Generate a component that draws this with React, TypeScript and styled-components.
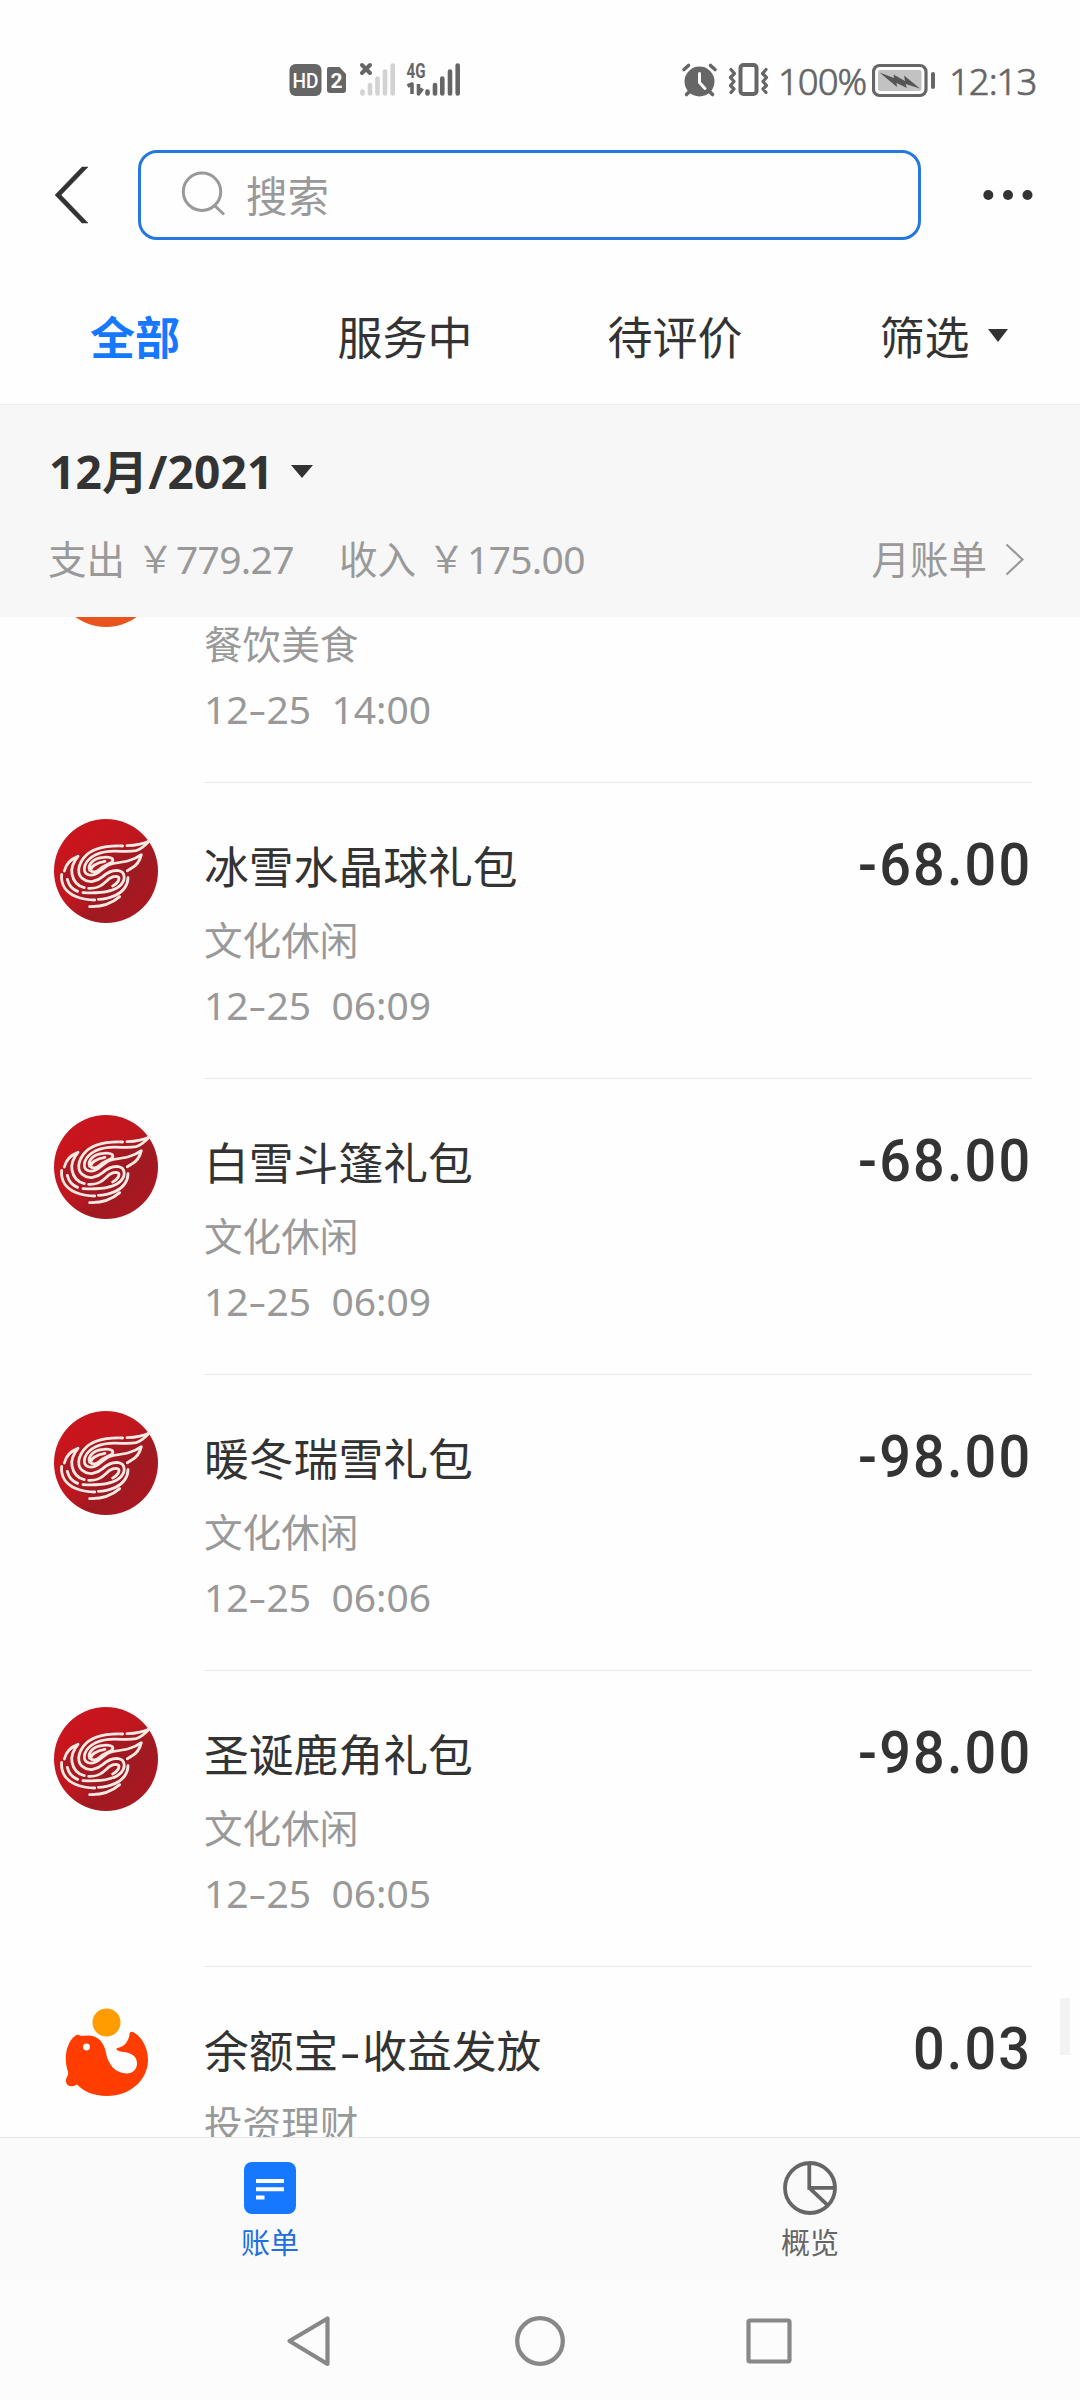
import React from "react";
import styled, { createGlobalStyle } from "styled-components";

const Global = createGlobalStyle`
  * { box-sizing: border-box; }
  html, body { margin: 0; padding: 0; background: #fff; }
  body { font-family: "Noto Sans", "Noto Sans CJK SC", sans-serif; color: #333; }
  svg { display: block; flex: none; }
`;

const Screen = styled.div`
  width: 1080px;
  height: 2400px;
  display: flex;
  flex-direction: column;
  background: #fefefe;
  overflow: hidden;
`;

const StatusBar = styled.div`
  height: 130px;
  flex: none;
  display: flex;
  align-items: center;
  justify-content: space-between;
  padding: 30px 42px 0 289px;
  color: #666;
`;

const StatusGroup = styled.div`
  display: flex;
  align-items: center;
`;

const StatusText = styled.span<{ $left: number; $width: number }>`
  margin-left: ${(p) => p.$left}px;
  width: ${(p) => p.$width}px;
  padding-top: 2px;
  font-size: 36.5px;
  font-weight: 300;
  line-height: 40px;
  letter-spacing: -1px;
  white-space: nowrap;
  -webkit-text-stroke: 0.7px #666;
`;

const SearchRow = styled.div`
  height: 130px;
  flex: none;
  display: flex;
  align-items: center;
  padding: 0 46px 0 54px;
`;

const SearchBox = styled.div`
  width: 783px;
  height: 90px;
  margin: 0 61px 0 48px;
  display: flex;
  align-items: center;
  gap: 20px;
  padding: 0 0 2px 40px;
  border: 3px solid #2478e0;
  border-radius: 19px;
  color: #999;
  font-size: 41.5px;
`;

const Tabs = styled.div`
  height: 144px;
  flex: none;
  display: flex;
  padding-top: 6px;
`;

const Tab = styled.div<{ $active?: boolean }>`
  flex: 0 0 270px;
  display: flex;
  align-items: center;
  justify-content: center;
  gap: 18px;
  font-size: 45px;
  color: ${(p) => (p.$active ? "#1677ff" : "#333")};
  font-weight: ${(p) => (p.$active ? 700 : 400)};
`;

const FilterTab = styled(Tab)`
  padding-right: 3px;
`;

const Triangle = styled.i<{ $size: number }>`
  width: 0;
  height: 0;
  border-left: ${(p) => p.$size}px solid transparent;
  border-right: ${(p) => p.$size}px solid transparent;
  border-top: 13px solid #333;
`;

const Summary = styled.div`
  height: 213px;
  flex: none;
  display: flex;
  flex-direction: column;
  padding: 36px 55px 0 48px;
  background: #f7f7f7;
  border-top: 1px solid #ededed;
`;

const Month = styled.div`
  display: flex;
  align-items: center;
  gap: 17px;
  height: 60px;
  padding-left: 1px;
  font-size: 46px;
  line-height: 60px;
  font-weight: 700;
`;

const MonthLabel = styled.span`
  letter-spacing: 0.2px;
`;

const Totals = styled.div`
  display: flex;
  align-items: center;
  height: 50px;
  margin-top: 33px;
  font-size: 39px;
  line-height: 50px;
  color: #999;
`;

const TotalLabel = styled.span<{ $left?: number }>`
  margin-left: ${(p) => p.$left ?? 0}px;
  font-size: 38.5px;
`;

const Yen = styled.span`
  margin-left: 12px;
  width: 39px;
  font-size: 37px;
`;

const TotalValue = styled.span`
  width: 119px;
  letter-spacing: -0.7px;
`;

const MonthlyBill = styled.div`
  margin-left: auto;
  display: flex;
  align-items: center;
  gap: 18px;
  font-size: 38.5px;
`;

const Body = styled.div`
  position: relative;
  flex: 1;
  min-height: 0;
  overflow: hidden;
`;

const List = styled.div`
  margin-top: -130px;
`;

const Row = styled.div`
  height: 296px;
  display: flex;
  padding: 0 48px 0 54px;
`;

const Avatar = styled.div`
  width: 104px;
  height: 104px;
  margin: 36px 46px 0 0;
  flex: none;
`;

const PlainAvatar = styled(Avatar)`
  border-radius: 50%;
  background: #e8541e;
`;

const RowContent = styled.div`
  flex: 1;
  display: flex;
  justify-content: space-between;
  padding-top: 52px;
  border-bottom: 1px solid #e9e9e9;
`;

const Info = styled.div`
  display: flex;
  flex-direction: column;
`;

const Title = styled.div`
  height: 64px;
  font-size: 44.8px;
  line-height: 64px;
  white-space: nowrap;
`;

const Category = styled.div`
  height: 56px;
  margin-top: 13px;
  font-size: 38.6px;
  line-height: 56px;
  color: #999;
`;

const Time = styled.div`
  height: 56px;
  margin-top: 9px;
  font-size: 39px;
  line-height: 56px;
  color: #999;
  white-space: pre;
`;

const Dash = styled.span<{ $gap: number }>`
  display: inline-block;
  margin: 0 ${(p) => p.$gap}px;
  transform: scaleX(1.45);
`;

const Amount = styled.div`
  height: 64px;
  margin: -2px 0 0;
  font-family: Roboto, sans-serif;
  font-weight: 500;
  font-size: 60px;
  line-height: 64px;
  letter-spacing: 2.3px;
  transform: scaleX(0.93);
  transform-origin: right center;
`;

const ScrollThumb = styled.div`
  position: absolute;
  right: 10px;
  top: 1381px;
  width: 10px;
  height: 57px;
  background: #f3f3f3;
`;

const BottomTabs = styled.div`
  height: 144px;
  flex: none;
  display: flex;
  background: #fafafa;
  border-top: 1px solid #e6e6e6;
`;

const BottomTab = styled.div<{ $active?: boolean }>`
  flex: 1;
  display: flex;
  flex-direction: column;
  align-items: center;
  padding-top: 23px;
  font-size: 29px;
  line-height: 42px;
  color: ${(p) => (p.$active ? "#1f6fe0" : "#666")};
`;

const BottomLabel = styled.span`
  margin-top: 7px;
`;

const SystemNav = styled.div`
  height: 119px;
  flex: none;
  display: flex;
  justify-content: space-between;
  align-items: center;
  padding: 0 286px 0 285px;
  background: #fcfcfc;
`;

const HomeSlot = styled.div`
  margin-left: 4px;
`;

const StatusSignals = () => (
  <svg width="174" height="36" viewBox="289 62 174 36">
    <rect x="289.5" y="64" width="32" height="32" rx="6" fill="#666" />
    <text x="305.5" y="88" fontFamily="Roboto" fontWeight="500" fontSize="21" fill="#fff" textAnchor="middle" textLength="26" lengthAdjust="spacingAndGlyphs">HD</text>
    <path d="M329 67h10.500l6.500 7v16q0 3-3 3h-13q-3 0-3-3v-21q0-2 2-2z" fill="#666" />
    <text x="336.500" y="88" fontFamily="Roboto" fontWeight="700" fontSize="21" fill="#fff" textAnchor="middle">2</text>
    <g strokeWidth="4.600" strokeLinecap="round" stroke="#d2d2d2">
      <path d="M362.500 91.500v2M370 85v8.500M377.500 78.500v15M385 71.500v22M392.700 65.500v28" />
    </g>
    <path d="M362 65l8 8M370 65l-8 8" stroke="#666" strokeWidth="4" strokeLinecap="round" />
    <text x="406.500" y="77.500" fontFamily="Roboto" fontWeight="700" fontSize="20" fill="#666" textLength="19" lengthAdjust="spacingAndGlyphs">4G</text>
    <path d="M407.500 86l4.500-2v10M418.500 84v10l4-5.500" fill="none" stroke="#666" strokeWidth="3.600" strokeLinejoin="round" />
    <path d="M427.500 91.500v2M435 85v8.500M442.300 78.500v15M450 71.500v22M457.700 65.500v28" stroke="#666" strokeWidth="4.600" strokeLinecap="round" />
  </svg>
);

const AlarmIcon = () => (
  <svg width="88" height="36" viewBox="681 62 88 36">
    <circle cx="699.500" cy="81.500" r="15" fill="#666" />
    <path d="M699.500 73.500v9l5.500 6" fill="none" stroke="#fff" strokeWidth="3" strokeLinecap="round" />
    <path d="M684 69.500l4.500-4M715 69.500l-4.500-4M690 91l-3.500 3.500M709 91l3.500 3.500" stroke="#666" strokeWidth="3.600" strokeLinecap="round" />
    <rect x="740.500" y="65" width="16" height="29" rx="3" fill="none" stroke="#666" strokeWidth="4" />
    <path d="M731 69.500l3.500 4-4 4 3.500 4-3.500 4 3.500 3.500-3 3.500M766 69.500l-3.500 4 4 4-3.500 4 3.500 4-3.500 3.500 3 3.500" fill="none" stroke="#666" strokeWidth="3.200" strokeLinecap="round" strokeLinejoin="round" />
  </svg>
);

const BatteryIcon = () => (
  <svg width="64" height="36" viewBox="872 62 64 36">
    <rect x="873.500" y="65.500" width="52.500" height="30" rx="6" fill="none" stroke="#666" strokeWidth="3.200" />
    <rect x="878" y="70" width="43.500" height="21" rx="2" fill="#c2c2c2" />
    <path d="M879.500 72.500l14.500 5.500-.5-3.500 11.500 6.500-1-5.500 16 13-14.500-4.500 1.500 4-10.500-5 .5 4z" fill="#555" />
    <rect x="931" y="72" width="4" height="17" rx="2" fill="#666" />
  </svg>
);

const BackIcon = () => (
  <svg width="36" height="60" viewBox="54 165 36 60">
    <path d="M82 167h6L61 195l27 28h-6L55 195z" fill="#333" stroke="#333" strokeWidth="0.500" />
  </svg>
);

const SearchIcon = () => (
  <svg width="45" height="46" viewBox="181 172 45 46">
    <circle cx="202" cy="192.700" r="18.700" fill="none" stroke="#999" strokeWidth="3" />
    <path d="M214.500 206.500l9.500 9" stroke="#999" strokeWidth="3" />
  </svg>
);

const MoreIcon = () => (
  <svg width="52" height="12" viewBox="982 189 52 12">
    <circle cx="988.300" cy="195" r="5" fill="#333" />
    <circle cx="1008" cy="195" r="5" fill="#333" />
    <circle cx="1027.500" cy="195" r="5" fill="#333" />
  </svg>
);

const ChevronRight = () => (
  <svg width="20" height="34" viewBox="1005 540 20 34">
    <path d="M1006.500 542.500l16 15-16 15" fill="none" stroke="#999" strokeWidth="2.200" />
  </svg>
);

const FlameLogo = () => (
  <svg width="104" height="104" viewBox="-6 -51 312 312">
    <defs>
      <linearGradient id="flameBg" x1="0.250" y1="0.150" x2="0.850" y2="0.750">
        <stop offset="0" stopColor="#c9151d" />
        <stop offset="0.450" stopColor="#c0171f" />
        <stop offset="0.750" stopColor="#9f1a22" />
        <stop offset="1" stopColor="#a81820" />
      </linearGradient>
    </defs>
    <circle cx="150" cy="105" r="156" fill="url(#flameBg)" />
    <path d="M66 62Q22 80 18 120Q30 190 124 208Q204 190 215 112Q244 96 258 56L282 14L200 30Q100 30 66 62Z" fill="#8c1a26" opacity="0.450" />
    <g fill="none" stroke="#fbe9e2" strokeWidth="8.500" strokeLinecap="round" strokeLinejoin="round">
      <path d="M200 30C145 28 104 38 82 67C64 92 64 116 80 128C98 143 122 137 140 122C156 108 172 102 187 104C207 107 210 130 195 146C178 164 142 173 81 170" />
      <path d="M213 29C240 28 262 24 281 14C268 28 258 39 240 44C217 49 190 44 160 46C118 49 88 70 85 97C84 116 102 122 119 114C137 105 148 86 172 82C205 78 232 74 256 56C252 73 241 89 226 97L214 104" />
      <path d="M101 103C94 86 112 66 142 64C167 61 178 70 165 80C151 88 139 91 132 99C124 107 108 112 104 103C104 92 121 80 147 76" />
      <path d="M25 105C30 84 44 69 66 61C51 79 45 96 48 114C52 136 65 150 85 155" />
      <path d="M17 115C14 145 30 168 56 180C74 188 94 192 116 192" />
      <path d="M34 130C38 147 49 160 65 166" />
      <path d="M98 157C124 158 137 150 151 136C163 123 178 118 187 123C193 130 183 144 170 150" />
      <path d="M216 125C216 146 202 168 178 178C160 186 145 190 127 190" />
      <path d="M101 212C136 213 168 202 191 182" />
    </g>
  </svg>
);

const WhaleLogo = () => (
  <svg width="104" height="104" viewBox="54 2003 104 104">
    <circle cx="106.500" cy="2022.500" r="14" fill="#ff9c00" />
    <path
      d="M78 2034.500C80 2036.500 84 2035.500 88 2035.500C98 2035.500 104 2042 106 2053C108 2064 115 2073.500 127 2073.500C133 2073.500 137 2069 137 2063.500C137 2056 131 2052.500 123 2052C119 2051.500 115 2050 117 2048C124 2047.500 129 2041 129.500 2034C130 2031.500 132 2031 134 2032.500C143 2038 148 2049 148 2060C148 2080 130 2096 107 2096C93 2096 83 2091 77 2084.500C73 2087 67 2087 66 2082C65 2078 69 2076 68 2072C65 2063 65 2053 68 2046C70 2041 73 2036 78 2034.500Z"
      fill="#ff3d00"
    />
    <circle cx="86.500" cy="2047" r="3.400" fill="#fff" />
  </svg>
);

const BillIcon = () => (
  <svg width="54" height="54" viewBox="243 2161 54 54">
    <rect x="244" y="2162" width="52" height="52" rx="8" fill="#1677ff" />
    <path d="M256 2179h28v4h-28zM256 2187.300h28v4h-28zM256 2195.500h8.500v4h-8.500z" fill="#fff" />
  </svg>
);

const PieIcon = () => (
  <svg width="56" height="54" viewBox="782 2161 56 54">
    <circle cx="810" cy="2188" r="25" fill="none" stroke="#666" strokeWidth="3.800" />
    <path d="M809.300 2164v23.800H835M809.300 2187.800l18 17" fill="none" stroke="#666" strokeWidth="3.800" />
  </svg>
);

const NavBack = () => (
  <svg width="46" height="54" viewBox="285 2314 46 54">
    <path d="M327.500 2318.500v45.500L289.500 2341z" fill="none" stroke="#888" strokeWidth="4.200" strokeLinejoin="round" />
  </svg>
);

const NavHome = () => (
  <svg width="54" height="54" viewBox="513 2314 54 54">
    <circle cx="540" cy="2341" r="22.800" fill="none" stroke="#888" strokeWidth="4.300" />
  </svg>
);

const NavRecent = () => (
  <svg width="50" height="54" viewBox="744 2314 50 54">
    <rect x="748.500" y="2320.500" width="41" height="41" rx="1.500" fill="none" stroke="#888" strokeWidth="4.200" />
  </svg>
);

type Kind = "plain" | "flame" | "whale";

interface Entry {
  kind: Kind;
  title: string;
  category: string;
  time: string;
  amount: string;
}

const entries: Entry[] = [
  { kind: "plain", title: "", category: "餐饮美食", time: "12-25  14:00", amount: "" },
  { kind: "flame", title: "冰雪水晶球礼包", category: "文化休闲", time: "12-25  06:09", amount: "-68.00" },
  { kind: "flame", title: "白雪斗篷礼包", category: "文化休闲", time: "12-25  06:09", amount: "-68.00" },
  { kind: "flame", title: "暖冬瑞雪礼包", category: "文化休闲", time: "12-25  06:06", amount: "-98.00" },
  { kind: "flame", title: "圣诞鹿角礼包", category: "文化休闲", time: "12-25  06:05", amount: "-98.00" },
  { kind: "whale", title: "余额宝-收益发放", category: "投资理财", time: "", amount: "0.03" },
];

const WideDashText = ({ text, gap }: { text: string; gap: number }) => {
  const [head, tail] = text.split("-");
  if (tail === undefined) return <>{head}</>;
  return (
    <>
      {head}
      <Dash $gap={gap}>-</Dash>
      {tail}
    </>
  );
};

const EntryRow = ({ entry }: { entry: Entry }) => (
  <Row>
    {entry.kind === "plain" ? (
      <PlainAvatar />
    ) : (
      <Avatar>{entry.kind === "flame" ? <FlameLogo /> : <WhaleLogo />}</Avatar>
    )}
    <RowContent>
      <Info>
        <Title>
          <WideDashText text={entry.title} gap={4.7} />
        </Title>
        <Category>{entry.category}</Category>
        <Time>
          <WideDashText text={entry.time} gap={2.7} />
        </Time>
      </Info>
      <Amount>{entry.amount}</Amount>
    </RowContent>
  </Row>
);

export default function App() {
  return (
    <Screen>
      <Global />
      <StatusBar>
        <StatusGroup>
          <StatusSignals />
        </StatusGroup>
        <StatusGroup>
          <AlarmIcon />
          <StatusText $left={9} $width={94}>100%</StatusText>
          <BatteryIcon />
          <StatusText $left={13} $width={89}>12:13</StatusText>
        </StatusGroup>
      </StatusBar>
      <SearchRow>
        <BackIcon />
        <SearchBox>
          <SearchIcon />
          搜索
        </SearchBox>
        <MoreIcon />
      </SearchRow>
      <Tabs>
        <Tab $active>全部</Tab>
        <Tab>服务中</Tab>
        <Tab>待评价</Tab>
        <FilterTab>
          筛选
          <Triangle $size={10.5} />
        </FilterTab>
      </Tabs>
      <Summary>
        <Month>
          <MonthLabel>12月/2021</MonthLabel>
          <Triangle $size={11} />
        </Month>
        <Totals>
          <TotalLabel>支出</TotalLabel>
          <Yen>￥</Yen>
          <TotalValue>779.27</TotalValue>
          <TotalLabel $left={44}>收入</TotalLabel>
          <Yen>￥</Yen>
          <TotalValue>175.00</TotalValue>
          <MonthlyBill>
            月账单
            <ChevronRight />
          </MonthlyBill>
        </Totals>
      </Summary>
      <Body>
        <List>
          {entries.map((entry, i) => (
            <EntryRow key={i} entry={entry} />
          ))}
        </List>
        <ScrollThumb />
      </Body>
      <BottomTabs>
        <BottomTab $active>
          <BillIcon />
          <BottomLabel>账单</BottomLabel>
        </BottomTab>
        <BottomTab>
          <PieIcon />
          <BottomLabel>概览</BottomLabel>
        </BottomTab>
      </BottomTabs>
      <SystemNav>
        <NavBack />
        <HomeSlot>
          <NavHome />
        </HomeSlot>
        <NavRecent />
      </SystemNav>
    </Screen>
  );
}
